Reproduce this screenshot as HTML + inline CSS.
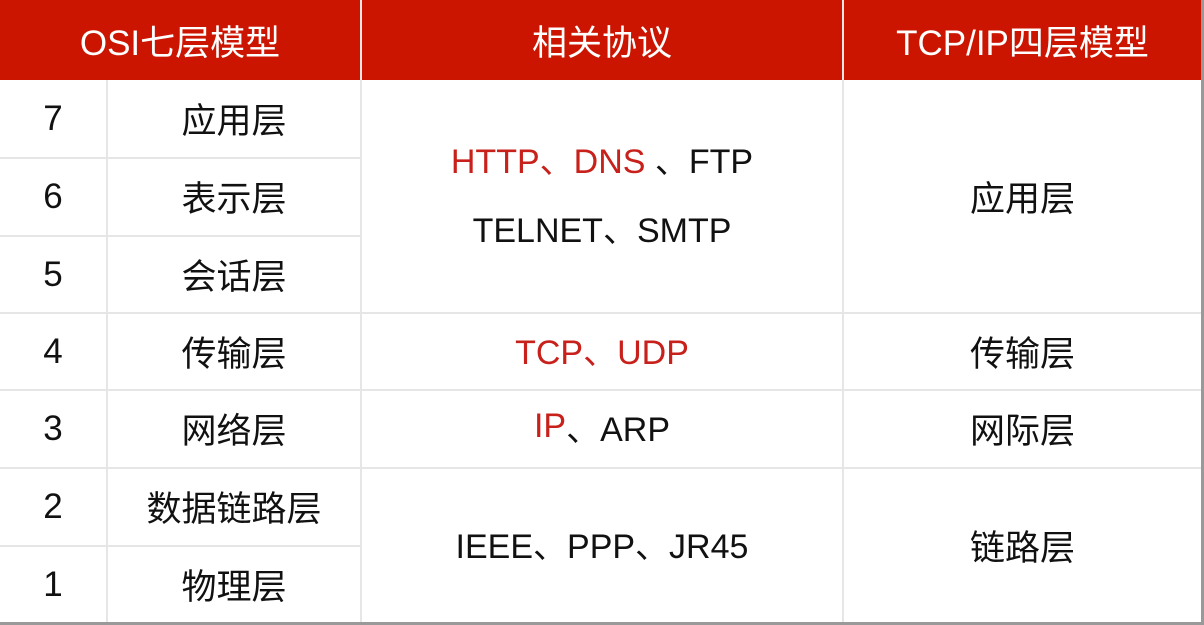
<!DOCTYPE html><html><head><meta charset="utf-8"><style>
body{margin:0;width:1204px;height:625px;background:#fff;position:relative;overflow:hidden;font-family:"Liberation Sans","Noto Sans CJK SC",sans-serif;}
.a{position:absolute;display:flex;align-items:center;justify-content:center;box-sizing:border-box;font-size:35px;color:#111;white-space:nowrap;}
.e{font-size:34px;}
.h{background:#cc1500;color:#fff;top:0;height:80px;}
.l{position:absolute;background:#e6e6e6;}
.r{color:#c8201a;}
</style></head><body>
<div class="a h" style="left:0;width:360px">OSI七层模型</div>
<div class="a h" style="left:362px;width:480px">相关协议</div>
<div class="a h" style="left:844px;width:357px">TCP/IP四层模型</div>
<div class="l" style="left:360px;top:0;width:2px;height:80px;background:#e8e8e8"></div>
<div class="l" style="left:842px;top:0;width:2px;height:80px;background:#e8e8e8"></div>
<div class="l" style="left:106px;top:80px;width:2px;height:545px"></div>
<div class="l" style="left:360px;top:80px;width:2px;height:545px"></div>
<div class="l" style="left:842px;top:80px;width:2px;height:545px"></div>
<div class="l" style="left:1201px;top:0;width:3px;height:625px;background:#999"></div>
<div class="l" style="left:0;top:622px;width:1204px;height:3px;background:#999"></div>
<div class="l" style="left:0;top:157px;width:360px;height:2px"></div>
<div class="l" style="left:0;top:235px;width:360px;height:2px"></div>
<div class="l" style="left:0;top:312px;width:1201px;height:2px"></div>
<div class="l" style="left:0;top:389px;width:1201px;height:2px"></div>
<div class="l" style="left:0;top:467px;width:1201px;height:2px"></div>
<div class="l" style="left:0;top:545px;width:360px;height:2px"></div>
<div class="a" style="left:0;width:106px;top:80px;height:77px">7</div><div class="a" style="left:108px;width:252px;top:80px;height:77px">应用层</div>
<div class="a" style="left:0;width:106px;top:158px;height:77px">6</div><div class="a" style="left:108px;width:252px;top:158px;height:77px">表示层</div>
<div class="a" style="left:0;width:106px;top:236px;height:77px">5</div><div class="a" style="left:108px;width:252px;top:236px;height:77px">会话层</div>
<div class="a" style="left:0;width:106px;top:313px;height:77px">4</div><div class="a" style="left:108px;width:252px;top:313px;height:77px">传输层</div>
<div class="a" style="left:0;width:106px;top:390px;height:77px">3</div><div class="a" style="left:108px;width:252px;top:390px;height:77px">网络层</div>
<div class="a" style="left:0;width:106px;top:468px;height:77px">2</div><div class="a" style="left:108px;width:252px;top:468px;height:77px">数据链路层</div>
<div class="a" style="left:0;width:106px;top:546px;height:77px">1</div><div class="a" style="left:108px;width:252px;top:546px;height:77px">物理层</div>
<div class="a e" style="left:362px;width:480px;top:138px;height:40px"><span class="r">HTTP、DNS</span>&nbsp;、FTP</div>
<div class="a e" style="left:362px;width:480px;top:207px;height:40px">TELNET、SMTP</div>
<div class="a e" style="left:362px;width:480px;top:311px;height:77px"><span class="r">TCP、UDP</span></div>
<div class="a e" style="left:362px;width:480px;top:388px;height:77px"><span class="r">IP</span>、ARP</div>
<div class="a e" style="left:362px;width:480px;top:466px;height:155px">IEEE、PPP、JR45</div>
<div class="a" style="left:844px;width:357px;top:80px;height:232px">应用层</div>
<div class="a" style="left:844px;width:357px;top:313px;height:77px">传输层</div>
<div class="a" style="left:844px;width:357px;top:390px;height:77px">网际层</div>
<div class="a" style="left:844px;width:357px;top:468px;height:155px">链路层</div>
</body></html>
